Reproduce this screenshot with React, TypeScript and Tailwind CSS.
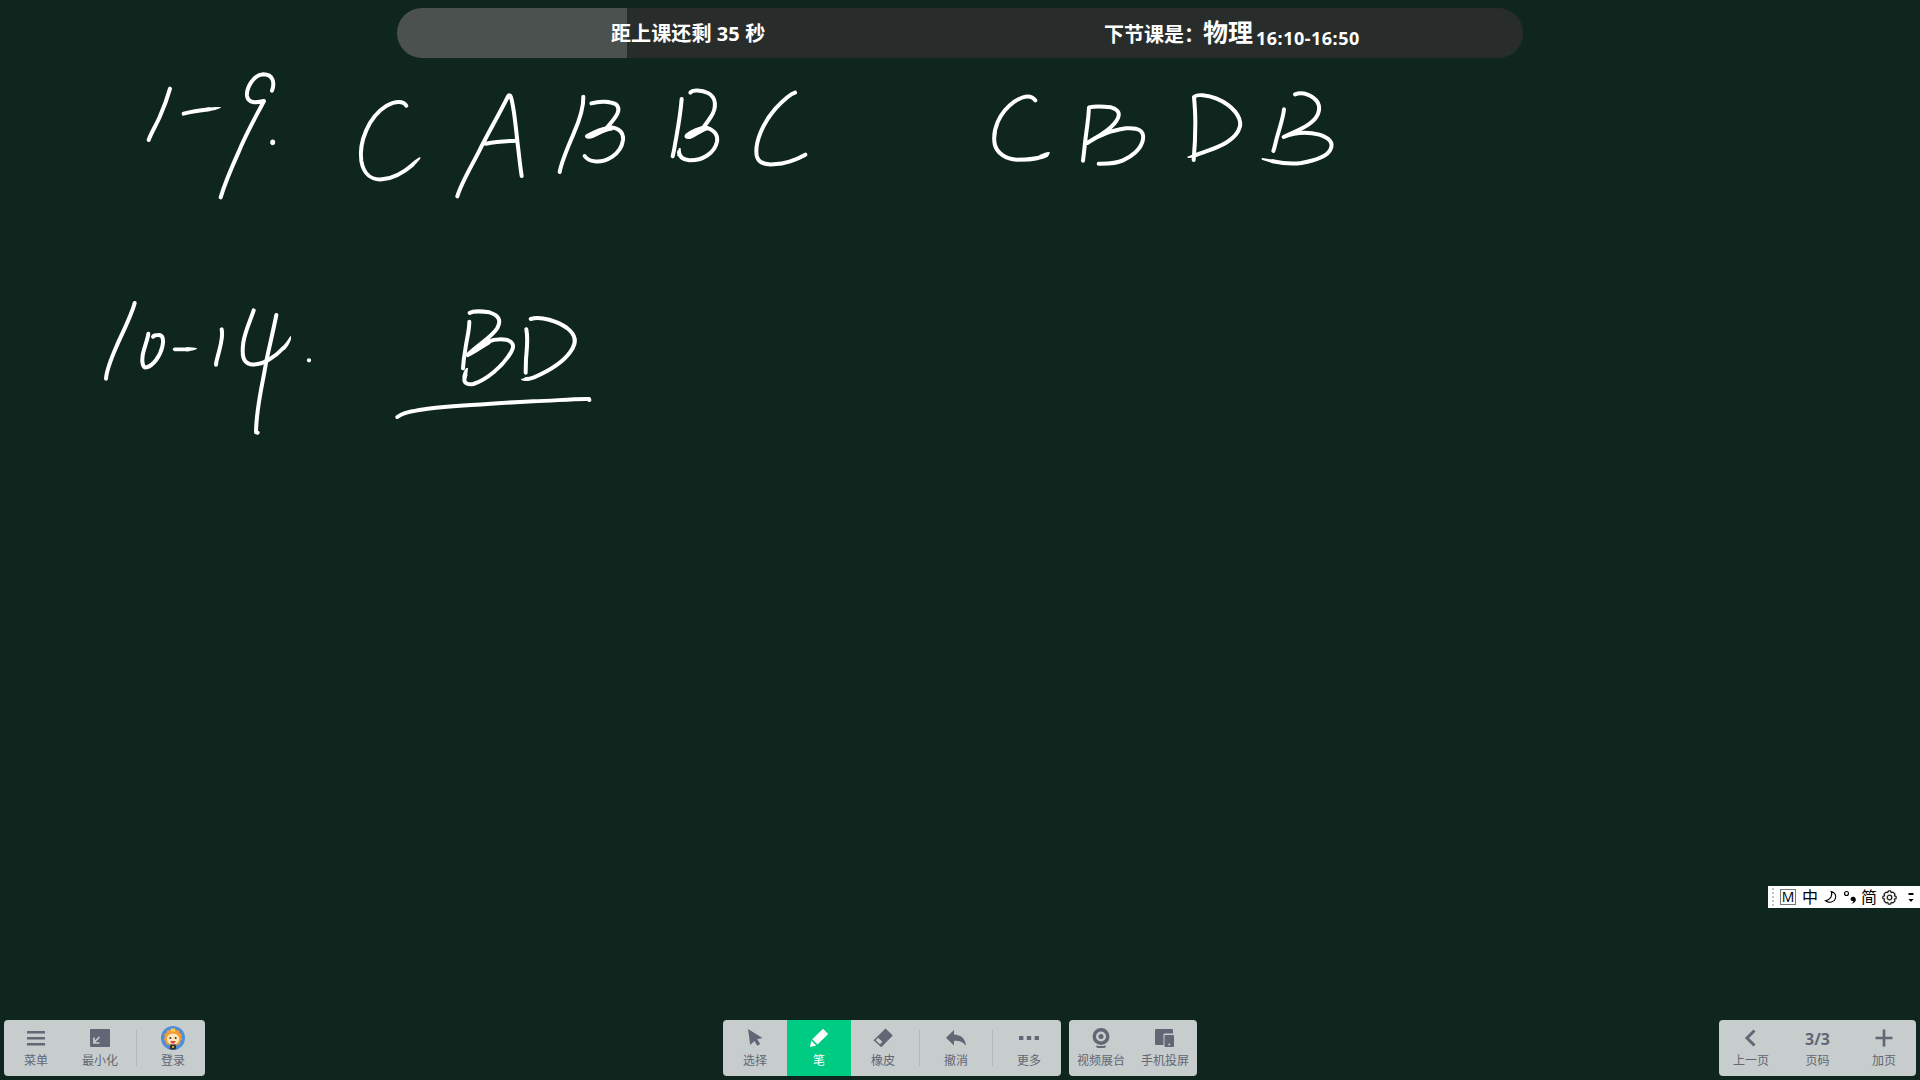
import type { ReactNode } from "react";

const cjk = "font-['Noto_Sans','Noto_Sans_CJK_SC',sans-serif]";

function Handwriting() {
  return (
    <svg
      className="pointer-events-none absolute inset-0 h-full w-full"
      viewBox="0 0 1920 1080"
      fill="none"
      stroke="#fff"
      strokeWidth={12}
      strokeLinecap="round"
      strokeLinejoin="round"
    >
      <g transform="translate(90 60) scale(.33333)">
        <path d="M240 86C231 118 221 144 209 171C198 196 183 220 176 240" />
        <path d="M281 161C304 155 331 151 358 148" />
        <path d="M350 143C366 142 381 140 392 141C394 143 390 145 383 147C373 151 362 153 350 154Z" fill="#fff" stroke="none" />
        <path d="M546 92C555 68 549 43 520 43C487 45 469 88 471 107C474 130 498 129 522 123C501 163 469 219 445 278C427 318 406 366 392 412" />
        <ellipse cx="548" cy="247" rx="5" ry="6" fill="#fff" strokeWidth="5" />
        <path d="M949 137C941 123 918 122 890 137C836 171 806 245 814 303C820 338 841 361 876 358C911 355 945 334 968 314" />
        <path d="M962 312C973 301 981 295 990 291C993 293 991 297 987 301C981 309 975 315 970 319Z" fill="#fff" stroke="none" />
      </g>
      <g transform="translate(440 60) scale(.33333)">
        <path d="M52 409C63 371 92 323 117 274C146 216 181 156 204 109C207 104 211 106 213 112C223 146 227 199 233 252C237 283 240 316 245 348" />
        <path d="M137 251C169 245 200 243 230 242" />
        <path d="M430 110C431 145 417 184 402 218C386 257 366 300 359 336" />
        <path d="M454 130C480 122 512 124 528 133C544 148 533 167 502 201C530 201 552 213 549 240C543 284 498 307 464 304C446 302 440 297 434 288" />
        <path d="M440 225C458 215 480 204 510 199L516 209C493 211 473 226 458 232C443 237 432 231 440 225Z" fill="#fff" strokeWidth="5" />
        <path d="M725 117C722 157 715 198 708 237C704 257 703 270 698 289" />
        <path d="M751 98C758 88 785 90 804 99C830 112 830 144 813 170C805 183 798 192 791 201C819 207 835 222 831 245C824 280 787 302 748 301C729 299 718 289 717 276" />
        <path d="M717 264L722 264L723 286L712 288Q712 274 717 264Z" fill="#fff" stroke="none" />
        <path d="M739 223C757 209 777 201 798 198L803 208C787 211 767 228 752 234C737 237 733 230 739 223Z" fill="#fff" strokeWidth="5" />
        <path d="M1065 98C1049 103 1028 123 1007 145C969 188 944 247 950 286C954 308 975 315 1001 313C1035 311 1068 300 1096 284" />
      </g>
      <g transform="translate(960 60) scale(.33333)">
        <path d="M226 121C213 103 191 107 164 124C117 157 97 210 104 252C110 279 138 299 171 299C204 299 226 299 246 290" />
        <path d="M239 285C249 280 260 275 269 276C270 280 267 286 263 290C255 295 247 296 241 298Z" fill="#fff" stroke="none" />
        <path d="M369 302C373 270 376 236 381 203C384 181 386 163 387 142C404 138 431 139 453 142C481 150 484 167 461 193C440 218 411 230 382 249C421 221 457 212 498 205C537 202 553 213 549 238C544 268 514 290 489 301C466 312 438 311 416 311" />
        <path d="M701 300C704 267 706 229 706 188C706 159 704 133 702 111C710 102 742 104 770 116C819 137 845 171 840 199C830 240 779 260 738 274C725 279 710 284 700 288" />
        <path d="M704 281L682 290Q681 295 690 294L706 291Z" fill="#fff" stroke="none" />
        <path d="M972 148C970 171 959 203 951 232C946 249 944 263 940 273" />
        <path d="M1005 103C1029 94 1059 106 1073 127C1084 149 1074 174 1046 193C1024 208 998 218 971 231C1007 216 1047 216 1078 224C1107 233 1121 248 1112 267C1103 290 1063 302 1024 309C990 314 962 309 938 304" />
        <path d="M942 299L907 294Q901 297 908 300L939 310Z" fill="#fff" stroke="none" />
      </g>
      <g transform="translate(90 280) scale(.33333)">
        <path d="M134 69C126 101 104 145 83 191C69 223 50 265 48 296" />
        <path d="M175 161C174 177 162 202 158 226C154 250 160 264 169 262C189 258 211 228 217 200C222 179 219 164 205 165C198 165 193 165 189 170" />
        <path d="M254 208L298 208" strokeWidth="11" />
        <path d="M288 202C302 202 314 203 321 205Q323 207 315 209C304 212 297 213 288 214Z" fill="#fff" stroke="none" />
        <path d="M395 148C401 172 390 202 383 230C380 241 378 247 378 254" />
        <path d="M491 91C481 122 466 151 460 187C455 225 458 247 482 253C518 258 558 228 580 204" />
        <path d="M576 201C588 189 595 177 601 168Q605 169 602 181C598 192 592 202 584 210Z" fill="#fff" stroke="none" />
        <path d="M559 105C550 151 539 195 528 248C520 303 499 377 498 457L503 458" />
        <circle cx="657" cy="241" r="4" fill="#fff" strokeWidth="5" />
        <path d="M1138 125C1138 153 1129 182 1126 209C1122 231 1120 247 1119 265" />
        <path d="M1139 99C1148 93 1175 93 1198 97C1228 106 1234 122 1222 144C1206 171 1167 192 1134 224C1169 187 1215 173 1248 179C1268 184 1275 197 1264 215C1237 262 1187 300 1150 312C1134 315 1123 309 1123 299L1126 285" />
        <path d="M1129 264L1134 264L1131 291L1117 294Q1118 275 1129 264Z" fill="#fff" stroke="none" />
        <path d="M1129 225C1152 206 1172 190 1201 180L1199 190C1178 202 1156 219 1133 229Z" fill="#fff" strokeWidth="5" />
        <path d="M1309 148C1315 178 1310 211 1308 237L1307 278" />
        <path d="M1322 117C1353 107 1403 124 1431 144C1459 165 1461 188 1442 214C1417 251 1371 275 1332 292Q1319 297 1308 297" />
        <path d="M1314 292L1293 297Q1292 301 1300 302L1318 302Z" fill="#fff" stroke="none" />
        <path d="M922 411C940 397 969 393 1008 387C1064 379 1139 376 1192 372C1244 368 1286 366 1330 364C1389 363 1443 356 1497 357L1498 360" />
      </g>
    </svg>
  );
}

function Tool({
  label,
  children,
  active = false,
  width = "w-16",
}: {
  label: string;
  children: ReactNode;
  active?: boolean;
  width?: string;
}) {
  return (
    <button
      className={`flex h-14 flex-col items-center ${width} ${
        active ? "bg-[#00cb83] text-white" : "text-[#626675]"
      }`}
    >
      <span className="mt-1.5 flex h-6 items-center justify-center">{children}</span>
      <span className="mt-0.5 whitespace-nowrap font-['Noto_Sans_CJK_SC',sans-serif] text-xs leading-4">{label}</span>
    </button>
  );
}

function Divider() {
  return (
    <div className="flex w-[9px] items-center justify-center">
      <div className="h-9 w-px bg-[#b2b7b9]" />
    </div>
  );
}

const panel = "flex overflow-hidden rounded bg-[#c6cdcc]";

function Lion() {
  return (
    <svg width="24" height="24" viewBox="0 0 24 24">
      <circle cx="12" cy="12" r="12" fill="#4d8ed8" />
      <path d="M12 2l2.3 2.2L17.5 4l.9 2.7 2.5 1.6-.8 2.6 1.1 2.6-2 2-.4 2.8-2.8.5L13.500 21h-3L8 18.800l-2.800-.5-.4-2.800-2-2 1.100-2.600-.8-2.600 2.500-1.600L6.500 4l3.200.2z" fill="#f49a38" />
      <path d="M9.500 5.500 10 2l2 1.300L14 2l.5 3.500z" fill="#ffd044" />
      <path d="M9.500 18h5l.8 5Q12 24.500 8.700 23z" fill="#33302e" />
      <path d="M11 20h2v2h-2z" fill="#cda643" />
      <ellipse cx="12" cy="13" rx="6.200" ry="5.500" fill="#ffe7bc" />
      <circle cx="9.300" cy="12" r="1" fill="#4a2d23" />
      <circle cx="14.700" cy="12" r="1" fill="#4a2d23" />
      <path d="M9.300 15h5.400q-.5 2.700-2.700 2.700T9.300 15z" fill="#d94840" />
    </svg>
  );
}

function ImeBar() {
  return (
    <div className="absolute right-0 top-[886px] flex h-[22px] w-[152px] items-center bg-white text-black">
      <div className="ml-1 flex w-[2px] flex-col gap-[2px]">
        {[0, 1, 2, 3, 4].map((i) => (
          <i key={i} className="h-[2px] w-[2px] bg-[#c5c5c5]" />
        ))}
      </div>
      <div className="ml-[6px] flex h-4 w-4 items-center justify-center border border-[#777] font-['Open_Sans',sans-serif] text-sm leading-none">
        M
      </div>
      <span className="ml-[6px] w-4 text-center text-base leading-5">中</span>
      <svg className="ml-[6px]" width="14" height="14" viewBox="0 0 14 14" fill="none" stroke="#000" strokeWidth="1.200">
        <path d="M7.300 1.600C9 5.500 6.600 9.600 1.500 10.800c3.600 2.700 8.700 1.300 9.900-2.200C12.700 5.500 10.800 2.300 7.300 1.600z" />
      </svg>
      <svg className="ml-[5px]" width="14" height="16" viewBox="0 0 14 16">
        <circle cx="3.500" cy="4.500" r="2" fill="none" stroke="#000" strokeWidth="1.100" />
        <path d="M7.800 14.500c2-.7 2.600-1.600 2.500-2.400-1.900.2-2.900-.9-2.700-2.500.2-1.700 2.100-2.500 3.700-1.600 3 1.800 1.700 6.400-3.500 6.500z" fill="#000" />
      </svg>
      <span className="ml-[4px] w-4 text-center text-base leading-5">简</span>
      <svg className="ml-[5px]" width="15" height="15" viewBox="0 0 15 15" fill="none" stroke="#222" strokeWidth="1.300" strokeLinejoin="round">
        <path d="m6.300.9-.5 1.700-1.800-.5-1.900 1.900.5 1.800-1.700.5v2.400l1.700.5-.5 1.800 1.900 1.900 1.800-.5.5 1.700h2.400l.5-1.700 1.800.5 1.900-1.900-.5-1.800 1.700-.5V6.300l-1.700-.5.5-1.800-1.900-1.900-1.800.5-.5-1.700z" />
        <circle cx="7.500" cy="7.500" r="2.300" />
      </svg>
      <svg className="ml-[11px]" width="6" height="11" viewBox="0 0 6 11">
        <path d="M.5 1h5v2h-5zM.5 7h5L3 10z" fill="#000" />
      </svg>
    </div>
  );
}

export default function App() {
  return (
    <div className={`relative flex h-screen w-full flex-col justify-between overflow-hidden bg-[#0f261e] ${cjk}`}>
      <Handwriting />

      <header className="relative mx-auto mt-2 flex h-[50px] w-[1126px] items-center overflow-hidden rounded-[25px] bg-[linear-gradient(to_right,#4b514f_230px,#282d2c_230px)] font-bold text-white">
        <div className="ml-[214px] mt-[2px] w-[493px] whitespace-nowrap text-xl leading-none tracking-[.1px]">距上课还剩 35 秒</div>
        <div className="mb-[2px] flex items-baseline whitespace-nowrap">
          <span className="w-[99px] text-xl leading-none">下节课是：</span>
          <span className="text-[25px] leading-none">物理</span>
          <span className="relative top-[3px] ml-[3px] text-lg leading-none tracking-[.5px]">16:10-16:50</span>
        </div>
      </header>

      <ImeBar />

      <footer className="relative mb-1 grid grid-cols-[1fr_auto_1fr] px-1">
        <div className={`${panel} justify-self-start`}>
          <Tool label="菜单">
            <svg width="18" height="18" viewBox="0 0 18 18" fill="currentColor">
              <path d="M0 2h18v2.500H0zM0 8h18v2.500H0zM0 14h18v2.500H0z" />
            </svg>
          </Tool>
          <Tool label="最小化">
            <svg width="20" height="18" viewBox="0 0 20 18">
              <rect width="20" height="18" rx="1" fill="currentColor" />
              <path d="M9.500 8 4.500 13M4 8.500V14h5.500" stroke="#c6cdcc" strokeWidth="1.700" fill="none" />
            </svg>
          </Tool>
          <Divider />
          <Tool label="登录">
            <Lion />
          </Tool>
        </div>

        <div className="flex gap-2">
          <div className={panel}>
            <Tool label="选择">
              <svg width="20" height="20" viewBox="0 0 20 20" fill="currentColor">
                <path d="m3 1 14.500 9-5.300 1.200 3 4.800-2.900 1.800-2.900-4.900L5.200 17z" />
              </svg>
            </Tool>
            <Tool label="笔" active>
              <svg width="20" height="20" viewBox="0 0 20 20" fill="currentColor">
                <path d="M14 .8 19.200 6 8.500 16.500 3.300 11.300zM2.300 12.500l4.900 4.900L1 19z" />
              </svg>
            </Tool>
            <Tool label="橡皮">
              <svg width="20" height="20" viewBox="0 0 20 20" fill="currentColor">
                <path fillRule="evenodd" d="M12.500.5 19.800 7.500 8.300 19.300.5 12.200zM5 9.700l-2.300 2.500 4.300 4 2.400-2.500z" />
              </svg>
            </Tool>
            <Divider />
            <Tool label="撤消">
              <svg width="20" height="18" viewBox="0 0 20 18" fill="currentColor">
                <path d="M8 1v4.600c7 .3 11.500 4.200 12 11.100-3-3.800-6.500-5.200-12-4.800v4.600L0 8.800z" />
              </svg>
            </Tool>
            <Divider />
            <Tool label="更多">
              <svg width="20" height="4" viewBox="0 0 20 4" fill="currentColor">
                <rect width="4.400" height="4" rx=".6" />
                <rect x="7.800" width="4.400" height="4" rx=".6" />
                <rect x="15.600" width="4.400" height="4" rx=".6" />
              </svg>
            </Tool>
          </div>
          <div className={panel}>
            <Tool label="视频展台">
              <svg width="18" height="20" viewBox="0 0 18 20" fill="currentColor">
                <path fillRule="evenodd" d="M9 0a8.500 8.500 0 1 1 0 17A8.500 8.500 0 0 1 9 0zm0 3.500a5 5 0 1 0 0 10 5 5 0 0 0 0-10z" />
                <circle cx="9" cy="8.500" r="2.500" />
                <path d="M4 17.500q5 1.200 10 0-.2 2.500-2 2.500H6q-1.800 0-2-2.500z" />
              </svg>
            </Tool>
            <Tool label="手机投屏">
              <svg width="20" height="18" viewBox="0 0 20 18" fill="currentColor">
                <path d="M1 0h16a1 1 0 0 1 1 1v3.500H9.500a1 1 0 0 0-1 1V16H1a1 1 0 0 1-1-1V1a1 1 0 0 1 1-1z" />
                <path fillRule="evenodd" d="M10.500 6H18a1 1 0 0 1 1 1v10a1 1 0 0 1-1 1h-7.500a1 1 0 0 1-1-1V7a1 1 0 0 1 1-1zm3.800 8.500a1 1 0 1 0 0 2 1 1 0 0 0 0-2z" />
              </svg>
            </Tool>
          </div>
        </div>

        <div className={`${panel} justify-self-end`}>
          <Tool label="上一页">
            <svg width="18" height="18" viewBox="0 0 18 18" fill="none" stroke="currentColor" strokeWidth="3">
              <path d="M12.500 1.500 5 9l7.500 7.500" />
            </svg>
          </Tool>
          <Tool label="页码" width="w-[69px]">
            <span className="mt-0.5 font-['Open_Sans',sans-serif] text-base font-bold leading-none">3/3</span>
          </Tool>
          <Tool label="加页">
            <svg width="18" height="18" viewBox="0 0 18 18" stroke="currentColor" strokeWidth="2.700">
              <path d="M.5 9h17M9 .5v17" />
            </svg>
          </Tool>
        </div>
      </footer>
    </div>
  );
}
